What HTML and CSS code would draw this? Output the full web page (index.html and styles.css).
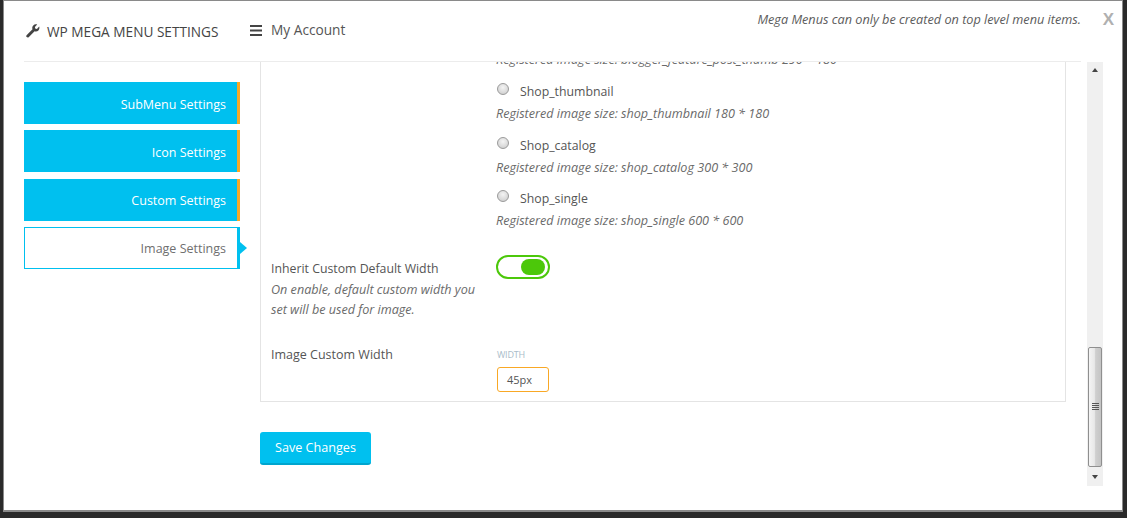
FILE: index.html
```html
<!DOCTYPE html>
<html lang="en">
<head>
<meta charset="utf-8">
<title>WP Mega Menu Settings</title>
<link rel="stylesheet" href="styles.css">
</head>
<body>
<div class="modal">
  <header class="topbar">
    <div class="title-tab">
      <svg class="wrench" viewBox="0 0 14 14" width="14" height="14"><path d="M13.2 2.6 10.9 4.9 9.2 4.6 8.9 2.9 11.2.6C9.8.1 8.300.4 7.300 1.400 6.300 2.400 6 3.900 6.500 5.200L.8 10.900C.1 11.600.1 12.500.7 13.100 1.300 13.700 2.200 13.700 2.900 13L8.600 7.300C9.900 7.800 11.400 7.500 12.400 6.500 13.400 5.500 13.700 4 13.200 2.600Z" fill="#444"/></svg>
      <span>WP MEGA MENU SETTINGS</span>
    </div>
    <div class="account-tab">
      <svg class="bars" viewBox="0 0 12 11" width="12" height="11"><path d="M0 0h12v2H0zM0 4.500h12v2H0zM0 9h12v2H0z" fill="#444"/></svg>
      <span>My Account</span>
    </div>
    <p class="notice">Mega Menus can only be created on top level menu items.</p>
    <span class="close">X</span>
  </header>
  <div class="body">
    <nav class="sidebar">
      <a class="side-item">SubMenu Settings</a>
      <a class="side-item">Icon Settings</a>
      <a class="side-item">Custom Settings</a>
      <a class="side-item active">Image Settings</a>
    </nav>
    <main class="main">
      <section class="panel">
        <div class="panel-inner">
          <div class="row row-sizes">
            <div class="label-col"></div>
            <div class="value-col">
              <p class="hint first">Registered image size: blogger_feature_post_thumb 290 * 180</p>
              <label class="radio-line"><span class="radio"></span>Shop_thumbnail</label>
              <p class="hint">Registered image size: shop_thumbnail 180 * 180</p>
              <label class="radio-line"><span class="radio"></span>Shop_catalog</label>
              <p class="hint">Registered image size: shop_catalog 300 * 300</p>
              <label class="radio-line"><span class="radio"></span>Shop_single</label>
              <p class="hint">Registered image size: shop_single 600 * 600</p>
            </div>
          </div>
          <div class="row row-toggle">
            <div class="label-col">
              <div class="label">Inherit Custom Default Width</div>
              <p class="desc">On enable, default custom width you set will be used for image.</p>
            </div>
            <div class="value-col"><span class="toggle"><span class="knob"></span></span></div>
          </div>
          <div class="row row-width">
            <div class="label-col"><div class="label label-wide">Image Custom Width</div></div>
            <div class="value-col">
              <div class="mini-label">WIDTH</div>
              <div class="width-input">45px</div>
            </div>
          </div>
        </div>
      </section>
      <button class="save">Save Changes</button>
    </main>
    <div class="scrollbar">
      <span class="arrow up"></span>
      <div class="track"></div>
      <div class="thumb"><span class="grip"></span></div>
      <span class="arrow down"></span>
    </div>
  </div>
</div>
</body>
</html>
```
FILE: styles.css
```css
* { box-sizing: border-box; }
html, body { margin: 0; height: 100%; }
body {
  background: #2a2a2a;
  padding: 0 4px 6px 3px;
  height: 518px;
  overflow: hidden;
  font-family: "Open Sans", "Noto Sans", sans-serif;
  color: #555;
}
.modal {
  height: 512px;
  background: #fff;
  border: 1px solid #8a8a8a;
  border-width: 1px 1px 2px 1px;
  padding-left: 20px;
  display: flex;
  flex-direction: column;
}
.topbar {
  height: 61px;
  flex: none;
  display: flex;
  align-items: flex-start;
  position: relative;
}
.title-tab {
  width: 226px;
  border-bottom: 1px solid #ececec;
  height: 61px;
  display: flex;
  align-items: flex-start;
  padding-top: 21px;
  gap: 7px;
  font-size: 13.65px;
  color: #444;
}
.wrench { margin: 2px 0 0 2px; }
.account-tab {
  flex: 1;
  height: 61px;
  border-bottom: 1px solid #ececec;
  display: flex;
  align-items: flex-start;
  padding-top: 19px;
  font-size: 13.7px;
  color: #555;
  gap: 9px;
  margin-right: 41px;
}
.bars { margin-top: 5px; }
.notice {
  position: absolute;
  right: 41px;
  top: 9px;
  margin: 0;
  font-size: 12.7px;
  font-style: italic;
  color: #5c5c5c;
}
.close {
  position: absolute;
  right: 8px;
  top: 9px;
  font: bold 17px "Liberation Sans", sans-serif;
  color: #b0b0b0;
}
.body {
  flex: 1;
  min-height: 0;
  display: flex;
}
.sidebar {
  width: 216px;
  flex: none;
  display: flex;
  flex-direction: column;
  gap: 6.4px;
  padding-top: 20px;
}
.side-item {
  height: 42px;
  background: #00c0ef;
  border-right: 3px solid #f9a825;
  color: #fff;
  font-size: 12.5px;
  text-align: right;
  padding: 14.6px 11px 0 0;
  line-height: 16px;
}
.active {
  background: #fff;
  border: 1px solid #00c0ef;
  border-right-width: 3px;
  color: #6f6f6f;
  position: relative;
  padding-top: 13px;
}
.active::after {
  content: "";
  position: absolute;
  right: -10px;
  top: 14px;
  border-left: 7px solid #00c0ef;
  border-top: 6px solid transparent;
  border-bottom: 6px solid transparent;
}
.main {
  width: 847px;
  padding-left: 20px;
  flex: none;
  display: flex;
  flex-direction: column;
  align-items: flex-start;
  overflow: hidden;
}
.panel {
  width: 806px;
  height: 340px;
  background: #fff;
  border: 1px solid #e4e4e4;
  border-top: 0;
  overflow: hidden;
  flex: none;
}
.panel-inner { padding: 0 10px; margin-top: -10px; }
.row { display: flex; }
.label-col { width: 225px; flex: none; }
.value-col { flex: 1; }
.hint {
  margin: 0;
  font-size: 12.6px;
  font-style: italic;
  color: #6a6a6a;
  line-height: 16px;
}
.first { margin-bottom: 16px; height: 16px; }
.radio-line {
  display: flex;
  align-items: center;
  font-size: 12.3px;
  color: #555;
  line-height: 16px;
  margin-bottom: 6px;
}
.radio-line + .hint { margin-bottom: 15.5px; }
.radio {
  width: 12px;
  height: 12px;
  border-radius: 50%;
  border: 1px solid #9a9a9a;
  background: radial-gradient(circle at 50% 35%, #f4f4f4, #c9c9c9);
  margin: -6px 11px 0 1px;
  flex: none;
}
.row-toggle { margin-top: 16px; }
.label { font-size: 12.3px; line-height: 16px; color: #555; }
.label-wide { font-size: 12.5px; }
.desc {
  margin: 3px 0 0;
  font-size: 12.6px;
  font-style: italic;
  color: #6a6a6a;
  line-height: 20px;
  width: 210px;
}
.toggle {
  display: flex;
  justify-content: flex-end;
  align-items: center;
  width: 54px;
  height: 24px;
  border: 2px solid #4cc80a;
  border-radius: 12px;
  padding: 0 3px;
  margin-top: -6px;
  background: #fff;
}
.knob {
  width: 24px;
  height: 16px;
  border-radius: 8px;
  background: #4cc80a;
}
.row-width { margin-top: 27.5px; }
.mini-label { font-size: 9px; letter-spacing: -0.2px; color: #a9bcc9; line-height: 10px; margin: 3px 0 7px 1px; }
.width-input {
  width: 52px;
  height: 25px;
  border: 1px solid #f9a825;
  border-radius: 3px;
  font-size: 11px;
  color: #555;
  line-height: 23px;
  padding-left: 9px;
  margin-left: 1px;
}
.save {
  margin-top: 30px;
  width: 111px;
  height: 33px;
  background: #00c0ef;
  border: 0;
  border-bottom: 2px solid #00a5ce;
  border-radius: 3px;
  color: #fff;
  font: 12.6px "Open Sans", sans-serif;
  padding: 0;
  flex: none;
}
.scrollbar {
  width: 16px;
  height: 424px;
  background: #f0f0f0;
  display: flex;
  flex-direction: column;
  align-items: stretch;
  flex: none;
  position: relative;
}
.track { flex: 1; }
.arrow { height: 16px; flex: none; position: relative; }
.arrow.down { height: 19px; }
.arrow::after {
  content: "";
  position: absolute;
  left: 5px;
  border-left: 3.500px solid transparent;
  border-right: 3.500px solid transparent;
}
.up::after { top: 6px; border-bottom: 4px solid #444; }
.down::after { top: 8px; border-top: 4px solid #444; }
.thumb {
  height: 120px;
  margin: 0 1px;
  border: 1px solid #8f8f8f;
  border-radius: 2px;
  background: linear-gradient(90deg, #f4f4f4 0%, #e8e8e8 45%, #cfcfcf 55%, #c4c4c4 100%);
  display: flex;
  align-items: center;
  justify-content: center;
}
.grip {
  width: 7px;
  height: 8px;
  background: repeating-linear-gradient(180deg, #555 0 1px, transparent 1px 2px);
}
```
